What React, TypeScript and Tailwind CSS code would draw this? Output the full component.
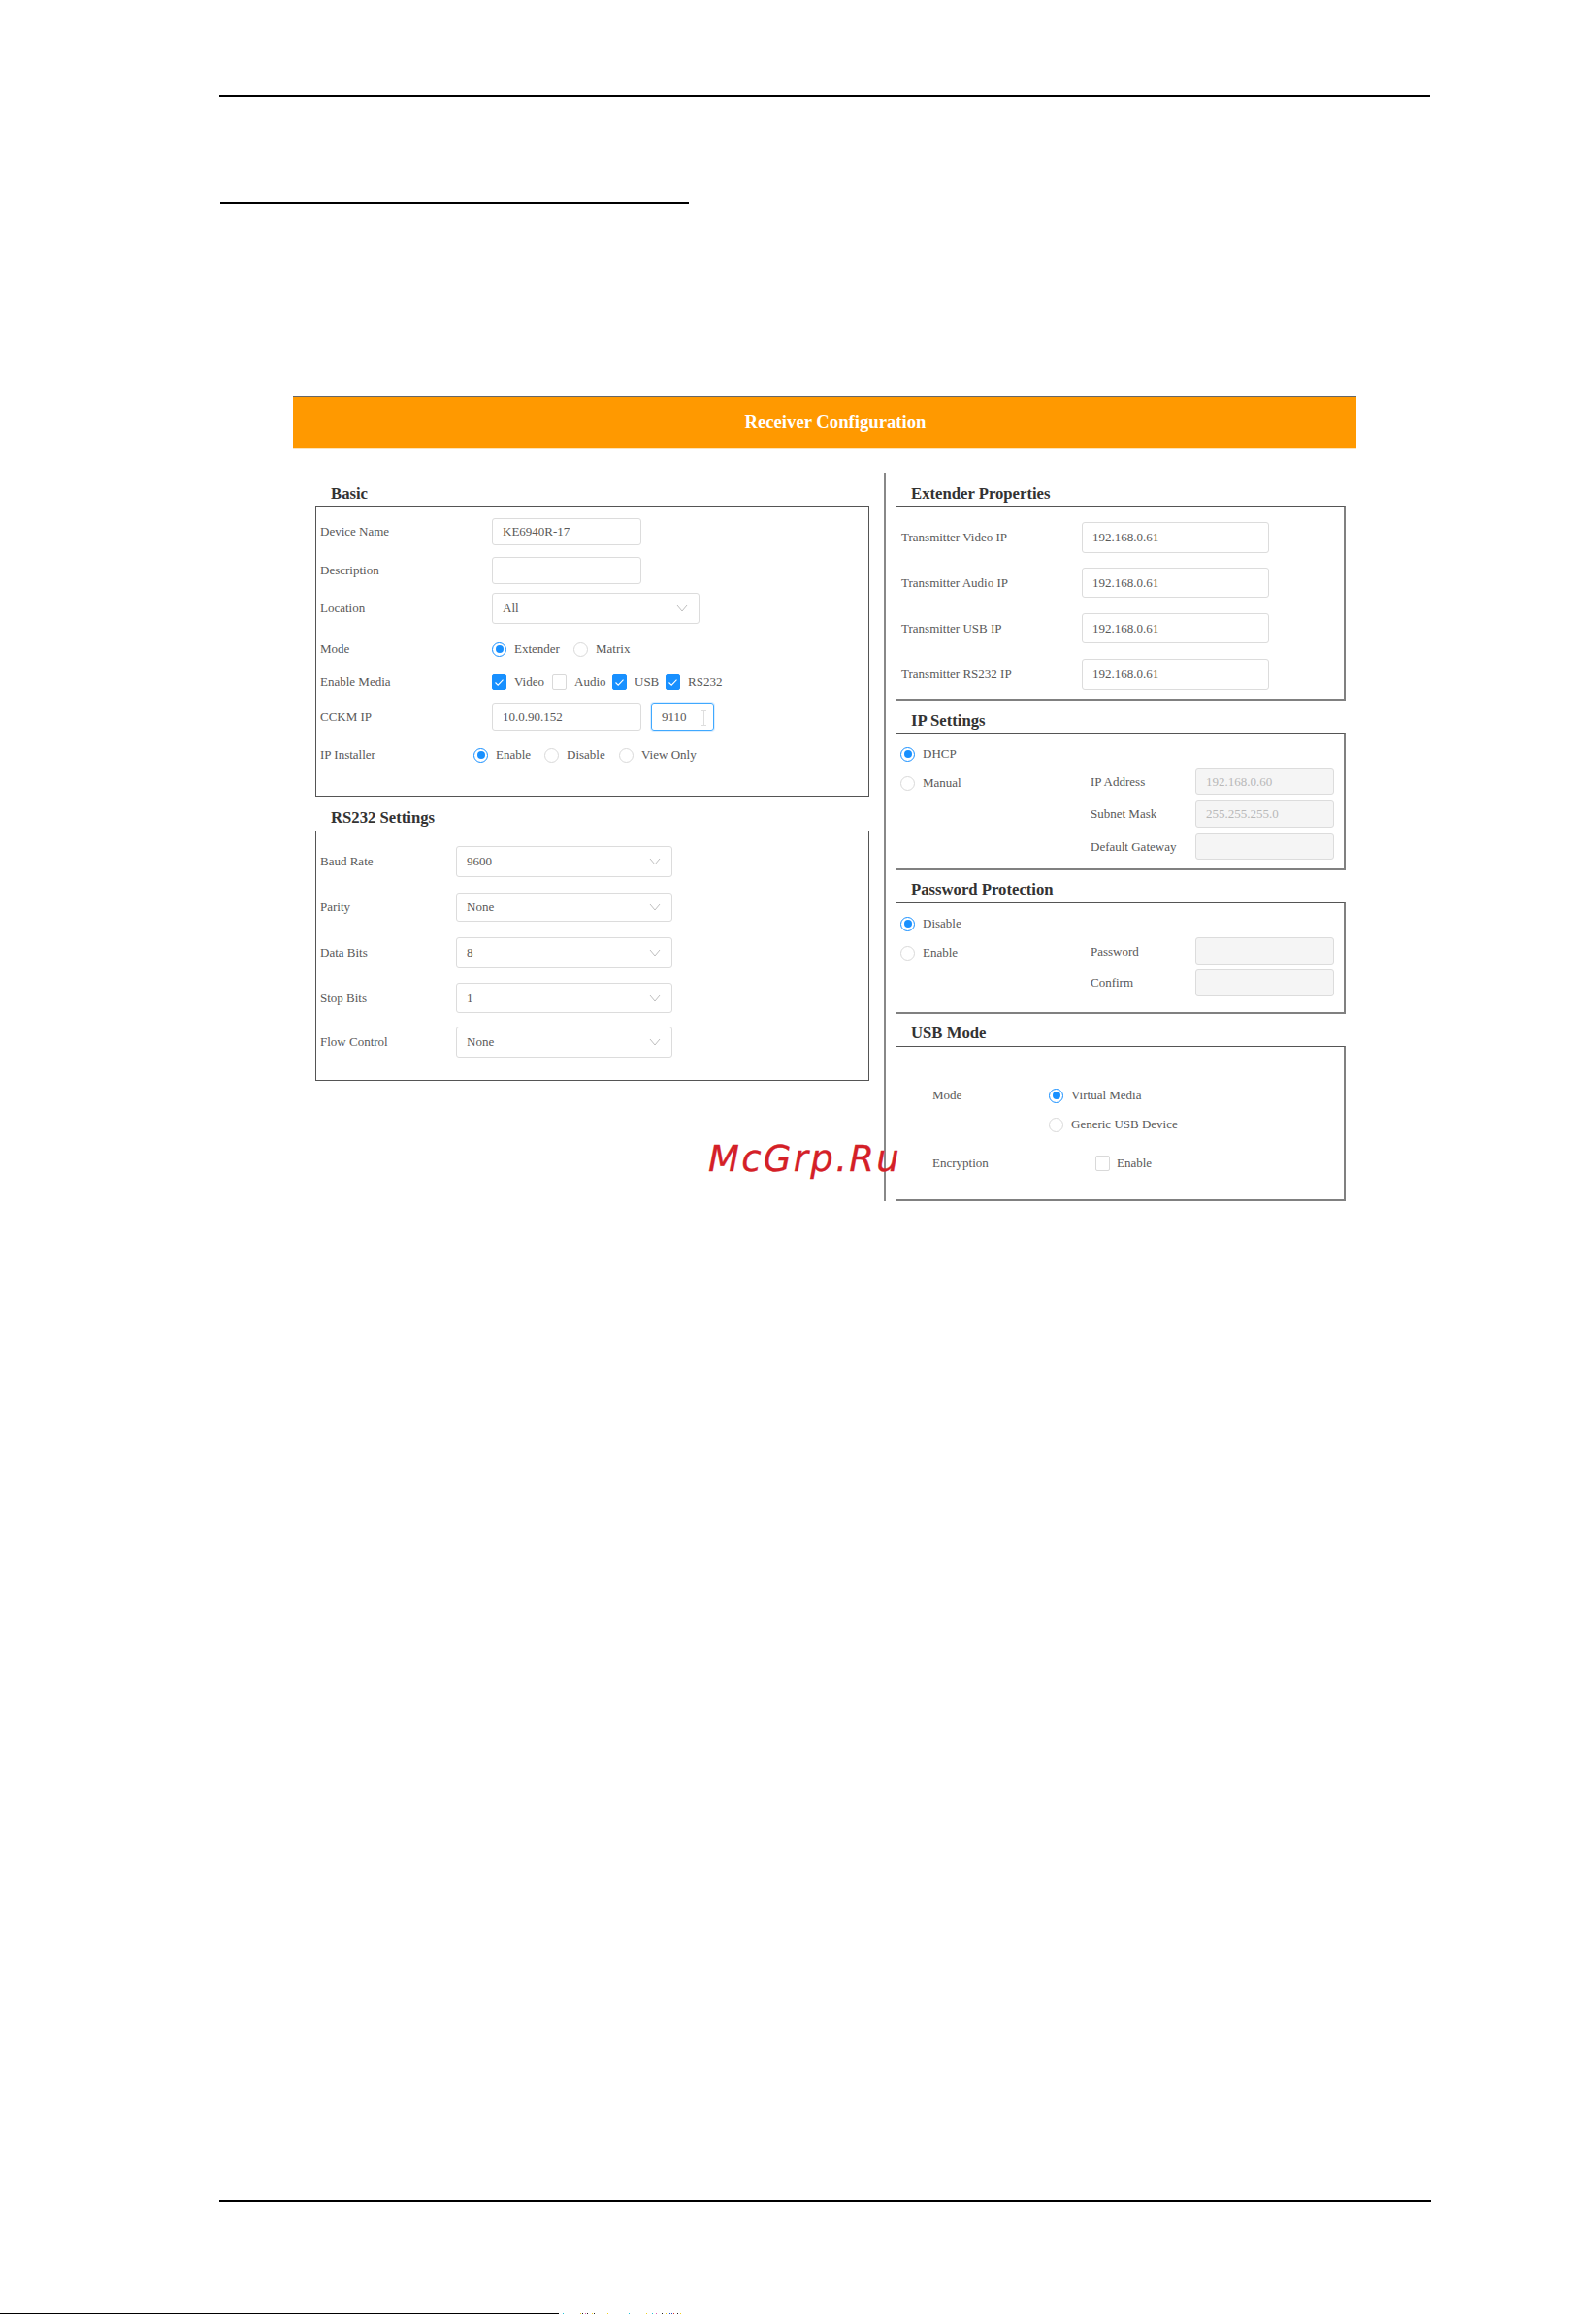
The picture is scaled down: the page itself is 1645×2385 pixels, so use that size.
const SERIF = "font-['Liberation_Serif',serif]";

function Radio({ on = false }: { on?: boolean }) {
  return (
    <span className={`flex h-[15px] w-[15px] shrink-0 items-center justify-center rounded-full border bg-white ${on ? "border-[#1890ff]" : "border-[#d9d9d9]"}`}>
      {on && <span className="h-[8px] w-[8px] rounded-full bg-[#1890ff]" />}
    </span>
  );
}

function Check({ on = false }: { on?: boolean }) {
  return (
    <span className={`flex h-[16px] w-[15px] shrink-0 items-center justify-center rounded-[2px] border ${on ? "border-[#1890ff] bg-[#1890ff]" : "border-[#d9d9d9] bg-white"}`}>
      {on && (
        <svg width="11" height="9" viewBox="0 0 11 9" fill="none">
          <path d="M1.5 4.5 L4.2 7.2 L9.5 1.6" stroke="white" strokeWidth="1.1" />
        </svg>
      )}
    </span>
  );
}

function Chevron() {
  return (
    <svg width="12" height="8" viewBox="0 0 12 8" fill="none" className="shrink-0">
      <path d="M1 1 L6 7 L11 1" stroke="#bfbfbf" strokeWidth="1" />
    </svg>
  );
}

function Heading({ children, className }: { children: string; className: string }) {
  return (
    <div className={`pl-[16px] text-[16.7px] font-bold leading-[18px] text-[#333] ${className}`}>
      {children}
    </div>
  );
}

function Input({ value, className }: { value?: string; className: string }) {
  return (
    <div className={`flex shrink-0 items-center rounded-[3px] border border-[#dcdcdc] bg-white pl-[10px] text-[#595959] ${className}`}>
      {value}
    </div>
  );
}

function Disabled({ value, className }: { value?: string; className: string }) {
  return (
    <div className={`flex w-[143px] shrink-0 items-center rounded-[3px] border border-[#dcdcdc] bg-[#f5f5f5] pl-[10px] text-[#b8b8b8] ${className}`}>
      {value}
    </div>
  );
}

function Select({ value, className }: { value: string; className: string }) {
  return (
    <div className={`flex shrink-0 items-center justify-between rounded-[3px] border border-[#dcdcdc] bg-white pl-[10px] pr-[11px] text-[#595959] ${className}`}>
      <span>{value}</span>
      <Chevron />
    </div>
  );
}

function Transmitter({ label, className }: { label: string; className: string }) {
  return (
    <div className={`flex items-center ${className}`}>
      <span className="w-[186px]">{label}</span>
      <Input value="192.168.0.61" className="h-full w-[193px]" />
    </div>
  );
}

function Rs232Row({ label, value, className }: { label: string; value: string; className: string }) {
  return (
    <div className={`flex items-center ${className}`}>
      <span className="w-[140px]">{label}</span>
      <Select value={value} className="h-full w-[223px]" />
    </div>
  );
}

function RadioRow({ label, on = false, className }: { label: string; on?: boolean; className: string }) {
  return (
    <div className={`flex h-[20px] items-center gap-[8px] ${className}`}>
      <Radio on={on} />
      <span>{label}</span>
    </div>
  );
}

const SPECKS: [number, string][] = [
  [4, "#22c4d8"], [22, "#f2d21e"], [24, "#222"], [27, "#e05cb0"], [29, "#222"], [34, "#f2d21e"], [36, "#222"],
  [50, "#f2d21e"], [72, "#22c4d8"], [90, "#f2d21e"], [96, "#22c4d8"], [100, "#e05cb0"], [106, "#222"],
  [110, "#f2d21e"], [114, "#2450c8"], [116, "#2450c8"], [118, "#d83030"], [122, "#222"], [125, "#f2d21e"],
];

export default function App() {
  return (
    <div className={`relative flex h-[2385px] w-[1645px] flex-col overflow-hidden bg-white text-[13px] text-[#595959] ${SERIF}`}>
      <div className="ml-[226px] mt-[98px] h-[2px] w-[1248px] shrink-0 bg-black" />
      <div className="ml-[227px] mt-[108px] h-[2px] w-[483px] shrink-0 bg-black" />

      <div className="ml-[302px] mt-[198px] w-[1096px] shrink-0">
        <div className="flex h-[55px] items-center justify-center border-b border-t border-b-[#fde3b8] border-t-[#666] bg-[#ff9900] pl-[22px] text-[18.7px] font-bold text-white">
          Receiver Configuration
        </div>

        <div className="ml-[23px] mt-[24px] flex h-[751px]">
          <div className="w-[571px] shrink-0">
            <Heading className="h-[35px] pt-[13px]">Basic</Heading>
            <div className="h-[299px] border border-[#555] pl-[4px]">
              <div className="mt-[11px] flex h-[28px] items-center">
                <span className="w-[177px]">Device Name</span>
                <Input value="KE6940R-17" className="h-full w-[154px]" />
              </div>
              <div className="mt-[12px] flex h-[28px] items-center">
                <span className="w-[177px]">Description</span>
                <Input className="h-full w-[154px]" />
              </div>
              <div className="mt-[9px] flex h-[32px] items-center">
                <span className="w-[177px]">Location</span>
                <Select value="All" className="h-full w-[214px]" />
              </div>
              <div className="mt-[16px] flex h-[20px] items-center">
                <span className="w-[177px]">Mode</span>
                <div className="flex w-[84px] items-center gap-[8px]"><Radio on /><span>Extender</span></div>
                <div className="flex items-center gap-[8px]"><Radio /><span>Matrix</span></div>
              </div>
              <div className="mt-[14px] flex h-[20px] items-center">
                <span className="w-[177px]">Enable Media</span>
                <div className="flex w-[62px] items-center gap-[8px]"><Check on /><span>Video</span></div>
                <div className="flex w-[62px] items-center gap-[8px]"><Check /><span>Audio</span></div>
                <div className="flex w-[55px] items-center gap-[8px]"><Check on /><span>USB</span></div>
                <div className="flex items-center gap-[8px]"><Check on /><span>RS232</span></div>
              </div>
              <div className="mt-[12px] flex h-[28px] items-center">
                <span className="w-[177px]">CCKM IP</span>
                <Input value="10.0.90.152" className="h-full w-[154px]" />
                <div className="relative ml-[10px] flex h-full w-[65px] items-center rounded-[3px] border border-[#40a9ff] pl-[10px] shadow-[0_0_0_1px_rgba(24,144,255,0.15)]">
                  9110
                  <svg width="7" height="16" viewBox="0 0 7 16" fill="none" className="absolute right-[6px] top-[6px]">
                    <path d="M1 0.5 H6 M3.5 0.5 V15.5 M1 15.5 H6" stroke="#dedede" strokeWidth="1" />
                  </svg>
                </div>
              </div>
              <div className="mt-[15px] flex h-[20px] items-center">
                <span className="w-[158px]">IP Installer</span>
                <div className="flex w-[73px] items-center gap-[8px]"><Radio on /><span>Enable</span></div>
                <div className="flex w-[77px] items-center gap-[8px]"><Radio /><span>Disable</span></div>
                <div className="flex items-center gap-[8px]"><Radio /><span>View Only</span></div>
              </div>
            </div>

            <Heading className="h-[35px] pt-[13px]">RS232 Settings</Heading>
            <div className="h-[258px] border border-[#555] pl-[4px]">
              <Rs232Row label="Baud Rate" value="9600" className="mt-[15px] h-[32px]" />
              <Rs232Row label="Parity" value="None" className="mt-[16px] h-[30px]" />
              <Rs232Row label="Data Bits" value="8" className="mt-[16px] h-[32px]" />
              <Rs232Row label="Stop Bits" value="1" className="mt-[15px] h-[31px]" />
              <Rs232Row label="Flow Control" value="None" className="mt-[14px] h-[32px]" />
            </div>
          </div>

          <div className="ml-[15px] h-full w-[2px] shrink-0 bg-[#888]" />

          <div className="ml-[10px] w-[464px] shrink-0">
            <Heading className="h-[35px] pt-[13px]">Extender Properties</Heading>
            <div className="h-[200px] border-b-2 border-l border-r-2 border-t border-[#808080] border-l-[#555] border-t-[#555] pl-[5px]">
              <Transmitter label="Transmitter Video IP" className="mt-[15px] h-[32px]" />
              <Transmitter label="Transmitter Audio IP" className="mt-[15px] h-[31px]" />
              <Transmitter label="Transmitter USB IP" className="mt-[16px] h-[31px]" />
              <Transmitter label="Transmitter RS232 IP" className="mt-[16px] h-[32px]" />
            </div>

            <Heading className="h-[34px] pt-[12px]">IP Settings</Heading>
            <div className="flex h-[141px] border-b-2 border-l border-r-2 border-t border-[#808080] border-l-[#555] border-t-[#555]">
              <div className="w-[200px] shrink-0 pl-[4px] pt-[10px]">
                <RadioRow label="DHCP" on className="" />
                <RadioRow label="Manual" className="mt-[10px]" />
              </div>
              <div className="pt-[35px]">
                <div className="flex h-[27px] items-center">
                  <span className="w-[108px]">IP Address</span>
                  <Disabled value="192.168.0.60" className="h-full" />
                </div>
                <div className="mt-[6px] flex h-[28px] items-center">
                  <span className="w-[108px]">Subnet Mask</span>
                  <Disabled value="255.255.255.0" className="h-full" />
                </div>
                <div className="mt-[6px] flex h-[27px] items-center">
                  <span className="w-[108px]">Default Gateway</span>
                  <Disabled className="h-full" />
                </div>
              </div>
            </div>

            <Heading className="h-[33px] pt-[11px]">Password Protection</Heading>
            <div className="flex h-[115px] border-b-2 border-l border-r-2 border-t border-[#808080] border-l-[#555] border-t-[#555]">
              <div className="w-[200px] shrink-0 pl-[4px] pt-[11px]">
                <RadioRow label="Disable" on className="" />
                <RadioRow label="Enable" className="mt-[10px]" />
              </div>
              <div className="pt-[35px]">
                <div className="flex h-[29px] items-center">
                  <span className="w-[108px]">Password</span>
                  <Disabled className="h-full" />
                </div>
                <div className="mt-[4px] flex h-[28px] items-center">
                  <span className="w-[108px]">Confirm</span>
                  <Disabled className="h-full" />
                </div>
              </div>
            </div>

            <Heading className="h-[33px] pt-[11px]">USB Mode</Heading>
            <div className="h-[160px] border-b-2 border-l border-r-2 border-t border-[#808080] border-l-[#555] border-t-[#555] pl-[37px]">
              <div className="mt-[40px] flex h-[20px] items-center">
                <span className="w-[120px]">Mode</span>
                <div className="flex items-center gap-[8px]"><Radio on /><span>Virtual Media</span></div>
              </div>
              <div className="ml-[120px] mt-[10px] flex h-[20px] items-center gap-[8px]">
                <Radio /><span>Generic USB Device</span>
              </div>
              <div className="mt-[20px] flex h-[20px] items-center">
                <span className="w-[168px]">Encryption</span>
                <div className="flex items-center gap-[7px]"><Check /><span>Enable</span></div>
              </div>
            </div>
          </div>
        </div>
      </div>

      <div className="ml-[226px] mt-[1030px] h-[2px] w-[1249px] shrink-0 bg-black" />

      <div className="mt-auto h-[1px] w-[576px] shrink-0 bg-black" />

      <svg width="130" height="1" viewBox="0 0 130 1" className="absolute bottom-0 left-[576px]">
        {SPECKS.map(([x, color]) => (
          <rect key={x} x={x} y="0" width="1" height="1" fill={color} />
        ))}
      </svg>

      <div className="absolute left-[730px] top-[1165px] font-['DejaVu_Sans',sans-serif] text-[37px] italic leading-[60px] tracking-[2.3px] text-[#d42027] [-webkit-text-stroke:0.3px_#d42027]">
        McGrp.Ru
      </div>
    </div>
  );
}
